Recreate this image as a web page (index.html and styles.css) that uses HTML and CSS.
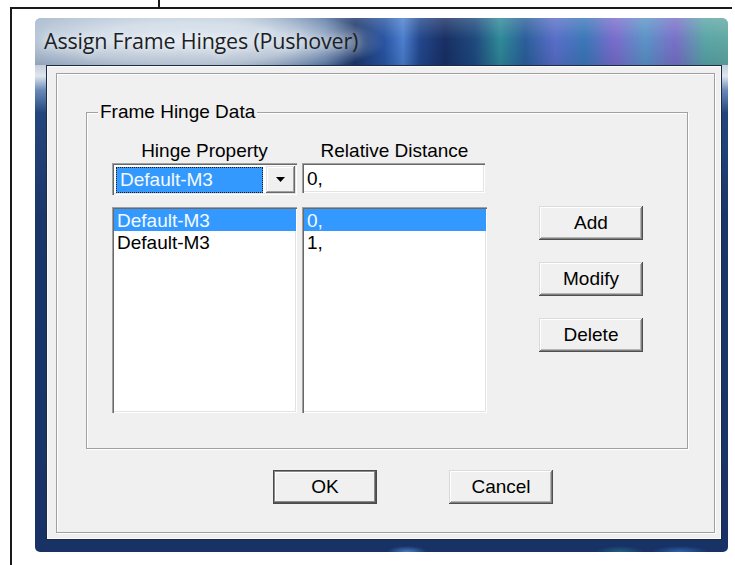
FILE: index.html
```html
<!DOCTYPE html>
<html lang="en">
<head>
<meta charset="utf-8">
<title>Assign Frame Hinges (Pushover)</title>
<link rel="stylesheet" href="styles.css">
</head>
<body>
<div class="tick"></div>
<div class="sheet">
  <div class="dialog">
    <div class="titlebar"><span class="title">Assign Frame Hinges (Pushover)</span></div>
    <div class="client">
      <div class="panel">
        <fieldset class="group">
          <legend>Frame Hinge Data</legend>
          <div class="group-body">
            <div class="table">
              <div class="col-head">Hinge Property</div>
              <div class="col-head">Relative Distance</div>
              <div class="combo">
                <div class="combo-value">Default-M3</div>
                <div class="combo-btn">
                  <svg width="9" height="5" viewBox="0 0 9 5"><polygon points="0,0 9,0 4.5,5" fill="#000"/></svg>
                </div>
              </div>
              <div class="edit">0,</div>
              <div class="list">
                <div class="row sel">Default-M3</div>
                <div class="row">Default-M3</div>
              </div>
              <div class="list">
                <div class="row sel">0,</div>
                <div class="row">1,</div>
              </div>
            </div>
            <div class="actions">
              <button class="btn">Add</button>
              <button class="btn">Modify</button>
              <button class="btn">Delete</button>
            </div>
          </div>
        </fieldset>
        <div class="footer">
          <button class="btn default">OK</button>
          <button class="btn">Cancel</button>
        </div>
      </div>
    </div>
  </div>
</div>
</body>
</html>
```

FILE: styles.css
```css
* { box-sizing: border-box; }

html, body {
  margin: 0;
  background: #fff;
}

body {
  width: 735px;
  height: 565px;
  overflow: hidden;
  font-family: "Liberation Sans", Arial, sans-serif;
  color: #000;
}

/* page edge lines behind the dialog */
.tick {
  width: 2px;
  height: 7px;
  margin-left: 158px;
  background: #1a1a1a;
}

.sheet {
  margin-left: 10px;
  width: 722px;
  height: 558px;
  border-top: 2px solid #1a1a1a;
  border-left: 2px solid #1a1a1a;
  padding: 9px 0 0 23px;
}

/* window frame */
.dialog {
  width: 693px;
  height: 534px;
  display: flex;
  flex-direction: column;
  border-radius: 6px 6px 5px 5px;
  overflow: hidden;
  background:
    radial-gradient(ellipse 20px 6px at 372px 100%, rgba(90, 150, 225, 0.75), rgba(90, 150, 225, 0)),
    radial-gradient(ellipse 24px 6px at 585px 100%, rgba(40, 130, 140, 0.6), rgba(40, 130, 140, 0)),
    radial-gradient(ellipse 28px 6px at 645px 100%, rgba(60, 120, 210, 0.7), rgba(60, 120, 210, 0)),
    linear-gradient(to bottom, #aebdcf 0, #c6d0dc 48px, #dfe6ee 58px, #6a8bb8 72px, #24457c 95px, #1a3669 200px, #183266 100%);
}

.titlebar {
  height: 47px;
  flex: none;
  display: flex;
  align-items: center;
  padding: 0 0 2px 9px;
  background:
    linear-gradient(to bottom, rgba(255, 255, 255, 0.18) 0, rgba(255, 255, 255, 0) 45%, rgba(0, 20, 60, 0.12) 100%),
    radial-gradient(ellipse 200px 36px at 150px 25px, rgba(232, 238, 245, 0.95) 0, rgba(214, 224, 235, 0.85) 55%, rgba(214, 224, 235, 0) 100%),
    linear-gradient(to right,
      #9fb2c8 0, #a9bacd 200px, #4f6f9e 290px, #1d3769 320px, #2a56a4 350px,
      #4c7fce 368px, #23478c 385px, #182f63 410px, #1f4a7e 440px, #2f8a98 465px,
      #2b5f9a 490px, #5a6ec8 520px, #3b78b8 550px, #7b6ccc 580px, #5a94c6 610px,
      #7a70c8 640px, #5aa6a6 670px, #62a8a2 693px);
}

.title {
  font-family: "Open Sans", "Noto Sans", sans-serif;
  font-size: 21.5px;
  color: #1c1f26;
  letter-spacing: -0.2px;
  text-shadow: 0 0 8px rgba(255, 255, 255, 0.9);
}

/* client area */
.client {
  flex: 1;
  margin: 0 6px 12px 11px;
  display: flex;
  flex-direction: column;
  padding: 7px 6px 6px 9px;
  background: #f0f0f0;
  border: 1px solid #1c2b45;
  box-shadow: inset 0 0 0 1px #fbfbfb;
}

.panel {
  flex: 1;
  display: flex;
  flex-direction: column;
  align-items: flex-start;
  border: 1px solid #a0a0a0;
  box-shadow: inset 1px 1px 0 #fff, 1px 1px 0 #fff;
}

/* group box */
.group {
  margin: 27px 0 0 29px;
  width: 602px;
  min-width: 0;
  padding: 17px 0 35px 0;
  border: 1px solid #a0a0a0;
  box-shadow: inset 1px 1px 0 #fff, 1px 1px 0 #fff;
}

.group legend {
  margin-left: 11px;
  padding: 0 2px;
  font-size: 19px;
  line-height: 22px;
  background: #f0f0f0;
}

.group-body {
  display: flex;
  align-items: flex-start;
  padding-left: 25px;
}

.table {
  display: grid;
  grid-template-columns: 185px 185px;
  column-gap: 5px;
}

.col-head {
  font-size: 19px;
  line-height: 22px;
  text-align: center;
}

/* sunken controls */
.combo,
.edit,
.list {
  background: #fff;
  box-shadow:
    inset 1px 1px 0 #a0a0a0,
    inset 2px 2px 0 #696969,
    inset -1px -1px 0 #fff,
    inset -2px -2px 0 #e3e3e3;
}

.combo {
  margin-top: 1px;
  height: 32px;
  display: flex;
  padding: 3px 2px 2px 3px;
}

.combo-value {
  flex: 1;
  margin: 1px 3px 0 1px;
  padding-left: 3px;
  background: #3399ff;
  border: 1px dotted #1a1a1a;
  color: #f4faff;
  font-size: 19px;
  line-height: 23px;
}

.combo-btn {
  width: 29px;
  display: flex;
  align-items: center;
  justify-content: center;
  background: #f0f0f0;
  box-shadow:
    inset -1px -1px 0 #696969,
    inset 1px 1px 0 #e3e3e3,
    inset -2px -2px 0 #a0a0a0,
    inset 2px 2px 0 #fff;
}

.edit {
  margin-top: 1px;
  width: 183px;
  height: 30px;
  padding-left: 5px;
  font-size: 19px;
  line-height: 31px;
}

.list {
  margin-top: 12px;
  height: 206px;
  padding: 2px 1px 1px 2px;
}

.row {
  height: 22px;
  padding: 2px 0 0 3px;
  font-size: 19px;
  line-height: 20px;
  white-space: nowrap;
}

.row.sel {
  background: #3399ff;
  color: #f4faff;
}

/* push buttons */
.btn {
  width: 104px;
  height: 34px;
  padding: 0;
  border: 0;
  font-family: "Liberation Sans", Arial, sans-serif;
  font-size: 19px;
  color: #000;
  background: #f0f0f0;
  box-shadow:
    inset -1px -1px 0 #4f4f4f,
    inset 1px 1px 0 #dadada,
    inset -2px -2px 0 #7d7d7d,
    inset 2px 2px 0 #fff,
    inset -3px -3px 0 #b4b4b4;
}

.btn.default {
  border: 1px solid #4a4a4a;
  box-shadow:
    inset -1px -1px 0 #555,
    inset 1px 1px 0 #8a8a8a,
    inset -2px -2px 0 #8a8a8a,
    inset 2px 2px 0 #fff;
}

.actions {
  margin-left: 52px;
  padding-top: 66px;
  display: flex;
  flex-direction: column;
  gap: 22px;
}

.footer {
  margin: 21px 0 0 216px;
  display: flex;
  gap: 72px;
}
```
